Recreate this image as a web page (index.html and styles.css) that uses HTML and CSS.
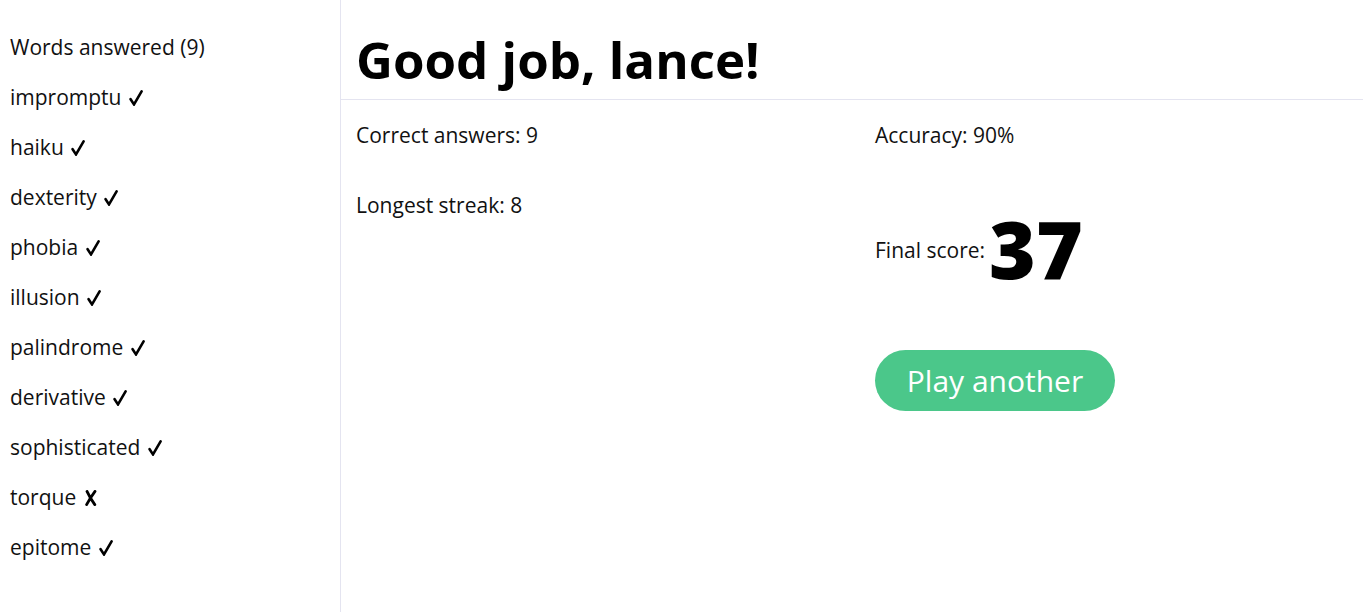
FILE: index.html
```html
<!DOCTYPE html>
<html>
<head>
<meta charset="utf-8">
<link rel="stylesheet" href="styles.css">
</head>
<body>
<div class="app">
  <aside class="sidebar">
    <div class="row">Words answered (9)</div>
    <div class="row word">impromptu <svg class="mark" viewBox="0 0 14 16"><path d="M1.6 9.2 L5 14.4 L12.6 1.4"/></svg></div>
    <div class="row word">haiku <svg class="mark" viewBox="0 0 14 16"><path d="M1.6 9.2 L5 14.4 L12.6 1.4"/></svg></div>
    <div class="row word">dexterity <svg class="mark" viewBox="0 0 14 16"><path d="M1.6 9.2 L5 14.4 L12.6 1.4"/></svg></div>
    <div class="row word">phobia <svg class="mark" viewBox="0 0 14 16"><path d="M1.6 9.2 L5 14.4 L12.6 1.4"/></svg></div>
    <div class="row word">illusion <svg class="mark" viewBox="0 0 14 16"><path d="M1.6 9.2 L5 14.4 L12.6 1.4"/></svg></div>
    <div class="row word">palindrome <svg class="mark" viewBox="0 0 14 16"><path d="M1.6 9.2 L5 14.4 L12.6 1.4"/></svg></div>
    <div class="row word">derivative <svg class="mark" viewBox="0 0 14 16"><path d="M1.6 9.2 L5 14.4 L12.6 1.4"/></svg></div>
    <div class="row word">sophisticated <svg class="mark" viewBox="0 0 14 16"><path d="M1.6 9.2 L5 14.4 L12.6 1.4"/></svg></div>
    <div class="row word">torque <svg class="mark cross" viewBox="0 0 14 16"><path d="M3 1.4 Q6 8 10.8 14.6 M11 1.4 Q6.5 7.5 2.6 14.6"/></svg></div>
    <div class="row word">epitome <svg class="mark" viewBox="0 0 14 16"><path d="M1.6 9.2 L5 14.4 L12.6 1.4"/></svg></div>
  </aside>
  <main class="main">
    <header class="header">
      <h1 class="title">Good job, lance!</h1>
    </header>
    <section class="stats">
      <div class="col">
        <div class="stat">Correct answers: 9</div>
        <div class="stat stat-gap">Longest streak: 8</div>
      </div>
      <div class="col">
        <div class="stat">Accuracy: 90%</div>
        <div class="final">
          <span class="final-label">Final score:</span>
          <span class="final-score">37</span>
        </div>
        <button class="play">Play another</button>
      </div>
    </section>
  </main>
</div>
</body>
</html>
```
FILE: styles.css
```css
html, body {
  margin: 0;
  padding: 0;
  background: #ffffff;
}
body {
  font-family: "Open Sans", "DejaVu Sans", sans-serif;
  color: #111111;
}
.app {
  display: flex;
  min-height: 100vh;
}
.sidebar {
  width: 341px;
  flex: 0 0 341px;
  border-right: 1px solid #e4e4f0;
  padding: 22px 0 0 10px;
  box-sizing: border-box;
}
.row {
  height: 50px;
  line-height: 50px;
  font-size: 21px;
  white-space: nowrap;
}
.mark {
  width: 14px;
  height: 16px;
  margin-left: 2px;
  vertical-align: -1px;
  fill: none;
  stroke: #000;
  stroke-width: 2.6;
  stroke-linecap: round;
  stroke-linejoin: miter;
}
.mark.cross {
  stroke-width: 2.8;
}
.main {
  flex: 1;
  min-width: 0;
}
.header {
  height: 99px;
  border-bottom: 1px solid #e4e4f0;
  display: flex;
  align-items: center;
  padding: 0 15px;
}
.title {
  margin: 0;
  font-size: 51px;
  font-weight: 700;
  color: #000;
  padding-top: 18px;
}
.stats {
  display: grid;
  grid-template-columns: 519px 1fr;
  padding: 23px 15px 0 15px;
}
.col {
  display: flex;
  flex-direction: column;
  align-items: flex-start;
}
.stat {
  font-size: 21px;
  line-height: 24px;
  height: 24px;
}
.stat-gap {
  margin-top: 46px;
}
.final {
  display: flex;
  align-items: center;
  margin-top: 60px;
  height: 86px;
}
.final-label {
  font-size: 21px;
}
.final-score {
  font-size: 80px;
  font-weight: 800;
  color: #000;
  line-height: 1;
  margin-left: 4px;
  padding-bottom: 4px;
}
.play {
  margin-top: 57px;
  width: 240px;
  height: 61px;
  border: none;
  border-radius: 31px;
  background: #4bc78a;
  color: #fff;
  font-family: inherit;
  font-size: 30px;
  padding: 0;
  cursor: pointer;
}
```
